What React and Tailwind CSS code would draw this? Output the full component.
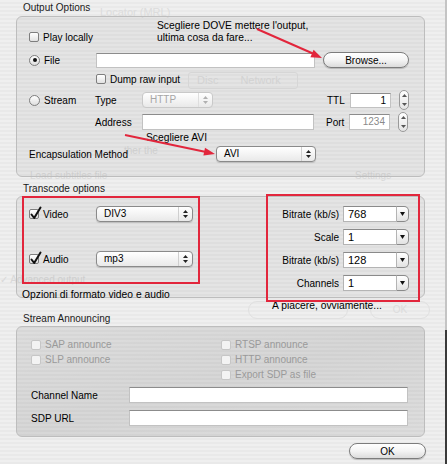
import React from 'react';

// Aqua-style "Streaming/Transcoding" sheet with red hand annotations

function Check({ checked, disabled }) {
  return (
    <span
      className={
        'relative inline-block w-[10px] h-[10px] shrink-0 rounded-[2px] border ' +
        (disabled
          ? 'border-[#c6c6c6] bg-[#f3f3f3]'
          : 'border-[#7e7e7e] bg-linear-to-b from-white to-[#e2e2e2]')
      }
    >
      {checked && (
        <svg className="absolute left-[0px] top-[-4px] overflow-visible" width="12" height="14" viewBox="0 0 12 14">
          <path d="M1.5 8.5 L4.2 12 L10.5 1.5" fill="none" stroke="#111" strokeWidth="2" strokeLinecap="round" strokeLinejoin="round" />
        </svg>
      )}
    </span>
  );
}

function Radio({ checked }) {
  return (
    <span className="inline-flex w-[11px] h-[11px] shrink-0 rounded-full border border-[#7e7e7e] bg-linear-to-b from-white to-[#dedede] items-center justify-center">
      {checked && <span className="w-[4px] h-[4px] rounded-full bg-[#111]" />}
    </span>
  );
}

function UpDown({ color = '#222' }) {
  return (
    <svg width="5" height="8" viewBox="0 0 5 8">
      <path d="M2.5 0 L5 3 L0 3 Z" fill={color} />
      <path d="M2.5 8 L5 5 L0 5 Z" fill={color} />
    </svg>
  );
}

function Popup({ value, className, disabled }) {
  return (
    <div
      className={
        'flex items-center h-[16px] rounded-[4px] border bg-linear-to-b from-white to-[#e9e9e9] ' +
        (disabled ? 'border-[#c9c9c9] text-[#a6a6a6] ' : 'border-[#8a8a8a] shadow-[0_1px_1px_rgba(0,0,0,0.15)] ') +
        className
      }
    >
      <span className="flex-1 pl-[7px] leading-[14px]">{value}</span>
      <span className={'flex items-center justify-center w-[14px] h-full border-l ' + (disabled ? 'border-[#dedede]' : 'border-[#cfcfcf]')}>
        <UpDown color={disabled ? '#b0b0b0' : '#222'} />
      </span>
    </div>
  );
}

function Field({ className, value, align = 'left', muted }) {
  return (
    <div
      className={
        'h-[15px] bg-white border border-[#c2c2c2] border-t-[#8c8c8c] leading-[13px] px-[4px] ' +
        (align === 'right' ? 'text-right ' : '') +
        (muted ? 'text-[#8a8a8a] ' : '') +
        className
      }
    >
      {value}
    </div>
  );
}

function Stepper() {
  return (
    <div className="flex flex-col items-center justify-between w-[10px] h-[20px] rounded-full border border-[#9a9a9a] bg-linear-to-b from-white to-[#e4e4e4] py-[3px]">
      <svg width="5" height="3" viewBox="0 0 5 3"><path d="M2.5 0 L5 3 L0 3 Z" fill="#555" /></svg>
      <svg width="5" height="3" viewBox="0 0 5 3"><path d="M2.5 3 L5 0 L0 0 Z" fill="#555" /></svg>
    </div>
  );
}

function Combo({ value }) {
  return (
    <div className="flex h-[16px]">
      <div className="w-[54px] bg-white border border-[#b4b4b4] border-t-[#8a8a8a] pl-[4px] leading-[14px] text-[11px]">{value}</div>
      <div className="w-[12px] flex items-center justify-center rounded-r-[5px] border border-l-0 border-[#8a8a8a] bg-linear-to-b from-white to-[#e2e2e2]">
        <svg width="5" height="4" viewBox="0 0 5 4"><path d="M0 0 L5 0 L2.5 4 Z" fill="#111" /></svg>
      </div>
    </div>
  );
}

function Pill({ label, className }) {
  return (
    <div
      className={
        'flex items-center justify-center h-[16px] rounded-full border border-[#7c7c7c] bg-linear-to-b from-white via-[#f4f4f4] to-[#dcdcdc] shadow-[0_1px_1px_rgba(0,0,0,0.2)] ' +
        className
      }
    >
      {label}
    </div>
  );
}

function GroupLabel({ children, className }) {
  return <div className={'ml-[7px] h-[14px] leading-[14px] text-[#1a1a1a] ' + className}>{children}</div>;
}

const groupBox = 'rounded-[6px] border border-[#bdbdbd] bg-black/[0.045]';

export default function App() {
  const combos = [
    ['Bitrate (kb/s)', '768'],
    ['Scale', '1'],
    ['Bitrate (kb/s)', '128'],
    ['Channels', '1'],
  ];

  return (
    <div className="relative flex w-[447px] h-[464px] overflow-hidden bg-[repeating-linear-gradient(180deg,#efefef_0px,#efefef_2px,#e9e9e9_2px,#e9e9e9_4px)] font-['Liberation_Sans',Arial,sans-serif] text-[10px] text-black">
      {/* window underneath the sheet, barely visible */}
      <div className="absolute inset-0 text-[#dcdcdc] text-[10px] pointer-events-none">
        <div className="absolute left-[100px] top-[4px] text-[11px]">Locator (MRL)</div>
        <div className="absolute left-[188px] top-[72px] w-[110px] h-[17px] rounded-[3px] border border-[#e0e0e0] flex items-center gap-[22px] pl-[8px] text-[11px]">
          <span>Disc</span>
          <span>Network</span>
        </div>
        <div className="absolute left-[124px] top-[143px] text-[#d8d8d8]">ther the</div>
        <div className="absolute left-[30px] top-[168px] text-[#d8d8d8]">Load subtitles file</div>
        <div className="absolute left-[355px] top-[168px] text-[#d8d8d8]">Settings</div>
        <div className="absolute left-[0px] top-[272px] text-[#d8d8d8]">✓ Advanced output</div>
        <div className="absolute left-[248px] top-[301px] w-[100px] h-[18px] rounded-full border border-[#e0e0e0]" />
        <div className="absolute left-[370px] top-[301px] w-[60px] h-[18px] rounded-full border border-[#e0e0e0] text-center leading-[16px]">OK</div>
      </div>

      <div className="relative flex-1 pl-[16px] pr-[20px] pt-[1px]">
        {/* Output Options */}
        <GroupLabel className="mb-[1px]">Output Options</GroupLabel>
        <div className={groupBox + ' h-[161px] pl-[12px] pr-[15px]'}>
          <div className="flex items-center gap-[4px] h-[14px] mt-[13px]">
            <Check />
            <span>Play locally</span>
          </div>

          <div className="flex items-center h-[16px] mt-[8px]">
            <div className="flex items-center gap-[4px] w-[67px]">
              <Radio checked />
              <span>File</span>
            </div>
            <Field className="w-[219px]" />
            <Pill label="Browse..." className="ml-[8px] w-[86px]" />
          </div>

          <div className="flex items-center gap-[4px] h-[14px] mt-[4px] pl-[67px]">
            <Check />
            <span>Dump raw input</span>
          </div>

          <div className="flex items-center h-[22px] mt-[3px]">
            <div className="flex items-center gap-[4px] w-[66px]">
              <Radio />
              <span>Stream</span>
            </div>
            <span className="w-[47px]">Type</span>
            <Popup value="HTTP" disabled className="w-[71px]" />
            <span className="ml-[114px] w-[23px]">TTL</span>
            <Field className="w-[41px]" value="1" align="right" />
            <div className="ml-[8px]"><Stepper /></div>
          </div>

          <div className="flex items-center h-[22px]">
            <span className="ml-[66px] w-[47px]">Address</span>
            <Field className="w-[172px] h-[16px]" />
            <span className="ml-[12px] w-[23px]">Port</span>
            <Field className="w-[41px] h-[16px]" value="1234" align="right" muted />
            <div className="ml-[8px]"><Stepper /></div>
          </div>

          <div className="flex items-center h-[16px] mt-[13px]">
            <span className="w-[187px]">Encapsulation Method</span>
            <Popup value="AVI" className="w-[100px]" />
          </div>
        </div>

        {/* Transcode options */}
        <GroupLabel className="mt-[5px]">Transcode options</GroupLabel>
        <div className={groupBox + ' h-[102px] flex pl-[12px] pr-[15px] pt-[9px]'}>
          <div className="flex flex-col">
            <div className="flex items-center h-[16px]">
              <div className="flex items-center gap-[4px] w-[67px]">
                <Check checked />
                <span>Video</span>
              </div>
              <Popup value="DIV3" className="w-[97px]" />
            </div>
            <div className="flex items-center h-[16px] mt-[29px]">
              <div className="flex items-center gap-[4px] w-[67px]">
                <Check checked />
                <span>Audio</span>
              </div>
              <Popup value="mp3" className="w-[97px]" />
            </div>
          </div>
          <div className="ml-auto flex flex-col gap-[7px]">
            {combos.map(([label, value], i) => (
              <div key={i} className="flex items-center h-[16px]">
                <span className="w-[76px] pr-[4px] text-right">{label}</span>
                <Combo value={value} />
              </div>
            ))}
          </div>
        </div>

        {/* Stream Announcing */}
        <GroupLabel className="mt-[14px]">Stream Announcing</GroupLabel>
        <div className={groupBox + ' h-[111px] pl-[14px] pr-[16px] pt-[10px] bg-linear-to-br from-black/[0.03] via-black/[0.06] to-black/[0.03]'}>
          <div className="flex text-[#9a9a9a]">
            <div className="flex flex-col w-[190px]">
              {['SAP announce', 'SLP announce'].map(t => (
                <div key={t} className="flex items-center gap-[4px] h-[15px]">
                  <Check disabled />
                  <span>{t}</span>
                </div>
              ))}
            </div>
            <div className="flex flex-col">
              {['RTSP announce', 'HTTP announce', 'Export SDP as file'].map(t => (
                <div key={t} className="flex items-center gap-[4px] h-[15px]">
                  <Check disabled />
                  <span>{t}</span>
                </div>
              ))}
            </div>
          </div>
          <div className="flex items-center h-[16px] mt-[5px]">
            <span className="w-[98px]">Channel Name</span>
            <Field className="flex-1 h-[16px]" />
          </div>
          <div className="flex items-center h-[16px] mt-[7px]">
            <span className="w-[98px]">SDP URL</span>
            <Field className="flex-1 h-[16px]" />
          </div>
        </div>

        <div className="flex justify-end mt-[6px] mr-[-1px]">
          <Pill label="OK" className="w-[77px]" />
        </div>
      </div>

      {/* window edge */}
      <div className="flex flex-col w-[2px]">
        <div className="h-[330px] bg-[#c4c4c4]" />
        <div className="flex-1 bg-[#3a3a3a]" />
      </div>

      {/* annotations */}
      <div className="absolute inset-0 pointer-events-none font-['Liberation_Sans',Arial,sans-serif] text-[10.3px] text-black">
        <div className="absolute left-[157px] top-[20px] leading-[11.5px]">
          Scegliere DOVE mettere l'output,
          <br />
          ultima cosa da fare...
        </div>
        <div className="absolute left-[146px] top-[132px] leading-[11.5px]">Scegliere AVI</div>
        <div className="absolute left-[22px] top-[289px] leading-[11.5px]">Opzioni di formato video e audio</div>
        <div className="absolute left-[272px] top-[300px] leading-[11.5px]">A piacere, ovviamente...</div>

        <div className="absolute left-[22px] top-[196px] w-[178px] h-[88px] border-2 border-[#e2263c]" />
        <div className="absolute left-[266px] top-[194px] w-[154px] h-[108px] border-2 border-[#e2263c]" />

        <svg className="absolute left-0 top-0" width="447" height="464" viewBox="0 0 447 464">
          <line x1="257" y1="29" x2="314" y2="54" stroke="#e2263c" strokeWidth="2" />
          <polygon points="322,58 310.4,57.2 313.6,49.8" fill="#e2263c" />
          <line x1="125" y1="135" x2="206" y2="152" stroke="#e2263c" strokeWidth="2" />
          <polygon points="215,154 203.4,155.6 205,147.8" fill="#e2263c" />
        </svg>
      </div>
    </div>
  );
}
